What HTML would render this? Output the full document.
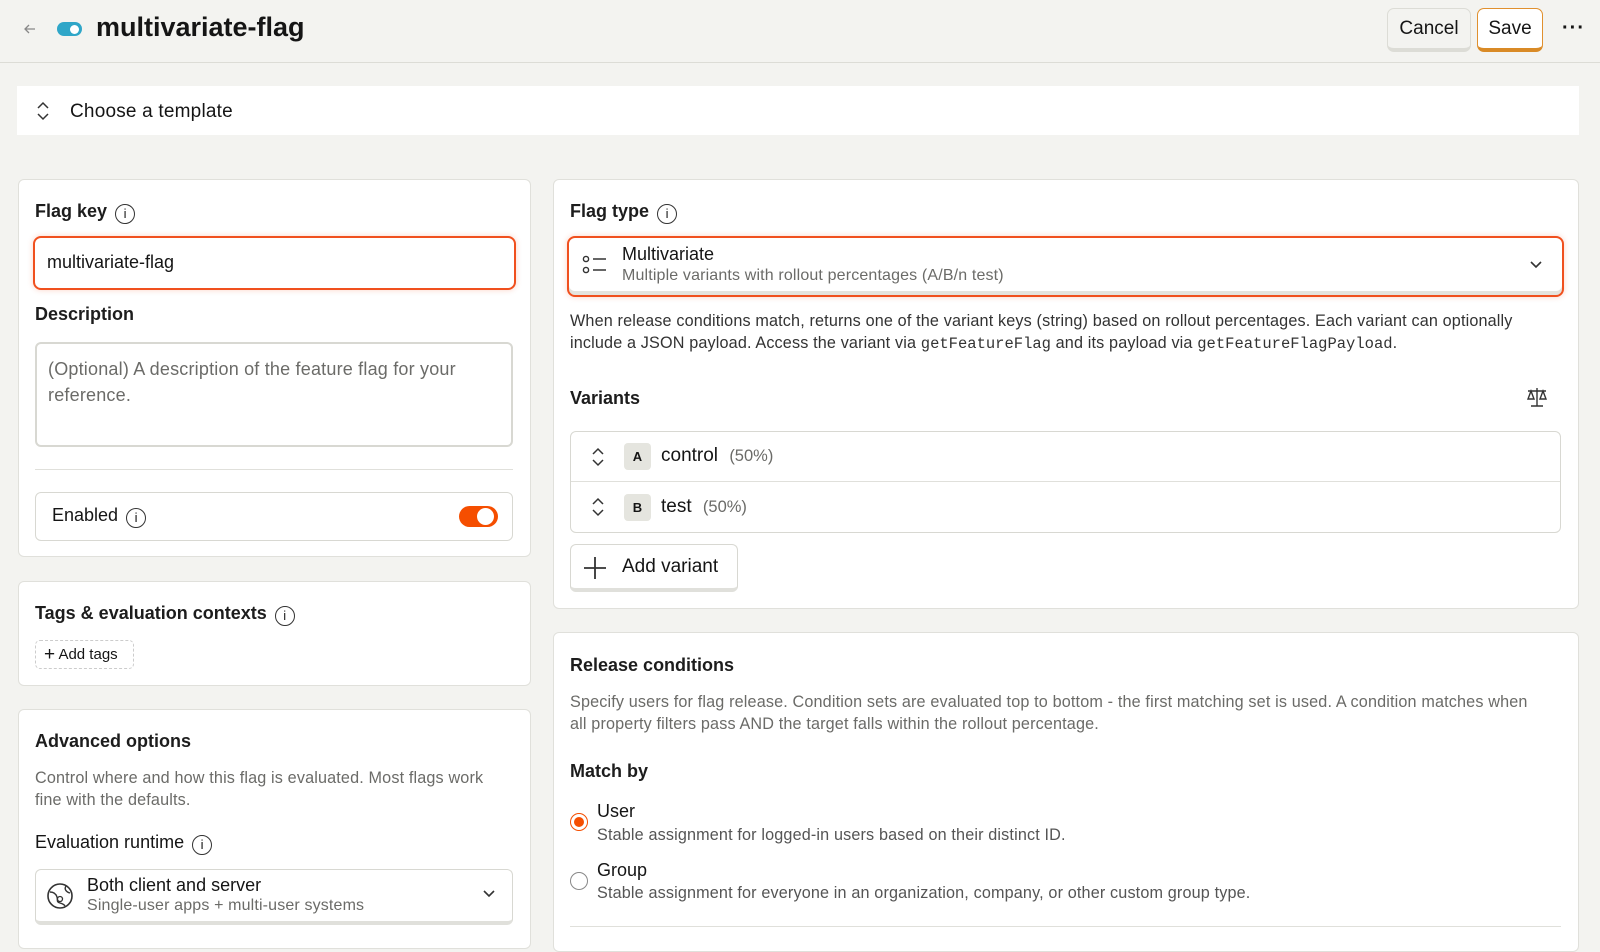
<!DOCTYPE html>
<html><head><meta charset="utf-8"><style>
*{box-sizing:border-box;margin:0;padding:0}
body{width:1600px;height:929px;overflow:hidden;background:#f3f3f0;font-family:"Liberation Sans",sans-serif;color:#151515;position:relative}
.a{position:absolute}
.card{position:absolute;background:#fff;border:1px solid #e0e0db;border-radius:6px}
.lbl{position:absolute;font-size:18px;font-weight:bold;color:#1d1d1d}
.muted{color:#6b6b68}
.info{display:inline-block;width:20px;height:20px;border:1.6px solid #333;border-radius:50%;font-size:13px;font-weight:normal;text-align:center;line-height:17px;vertical-align:0px;margin-left:8px;font-family:"Liberation Sans",sans-serif;position:relative;top:1px}
.box{position:absolute;border:1px solid #d8d8d2;border-radius:6px;background:#fff}
.mono{font-family:"Liberation Mono",monospace;font-size:15.5px;letter-spacing:0}
.p{font-size:16.2px;line-height:22px;letter-spacing:0.15px}
</style></head><body>
<!-- header -->
<div class="a" style="left:0;top:62px;width:1600px;height:1px;background:#dcdcd6"></div>
<svg class="a" style="left:22px;top:21px" width="16" height="16" viewBox="0 0 16 16"><path d="M13 8H3M7 4L3 8l4 4" fill="none" stroke="#888" stroke-width="1.3"/></svg>
<div class="a" style="left:57px;top:22px;width:25px;height:14px;border-radius:7px;background:#2fa6c8"></div>
<div class="a" style="left:70px;top:25px;width:9px;height:9px;border-radius:50%;background:#fff"></div>
<div class="a" style="left:96px;top:12px;font-size:27px;font-weight:bold">multivariate-flag</div>
<div class="a" style="left:1387px;top:8px;width:84px;height:44px;border:1px solid #dcdcd6;border-bottom:4px solid #dcdcd6;border-radius:7px;background:#f3f3f0;font-size:19px;text-align:center;line-height:40px">Cancel</div>
<div class="a" style="left:1477px;top:8px;width:66px;height:44px;border:1.5px solid #e0902e;border-bottom:4px solid #d98a26;border-radius:7px;background:#fff;font-size:19px;text-align:center;line-height:40px">Save</div>
<div class="a" style="left:1562px;top:17px;font-size:20px;font-weight:bold;letter-spacing:1px">···</div>
<!-- template -->
<div class="a" style="left:17px;top:86px;width:1562px;height:49px;background:#fff"></div>
<svg class="a" style="left:35px;top:101px" width="16" height="20" viewBox="0 0 16 20"><path d="M3 7l5-5 5 5M3 13l5 5 5-5" fill="none" stroke="#333" stroke-width="1.5"/></svg>
<div class="a" style="left:70px;top:101px;font-size:19px;letter-spacing:0.2px">Choose a template</div>
<!-- left card 1 -->
<div class="card" style="left:18px;top:179px;width:513px;height:378px"></div>
<div class="lbl" style="left:35px;top:201px">Flag key<span class="info">i</span></div>
<div class="a" style="left:33px;top:236px;width:483px;height:54px;border:2.5px solid #f0501e;border-radius:8px;background:#fff;box-shadow:0 0 6px rgba(240,80,30,.25)"></div>
<div class="a" style="left:47px;top:252px;font-size:18px">multivariate-flag</div>
<div class="lbl" style="left:35px;top:304px">Description</div>
<div class="box" style="left:35px;top:342px;width:478px;height:105px;border-width:2px"></div>
<div class="a muted" style="left:48px;top:356px;font-size:18px;line-height:26px;width:450px;letter-spacing:0.2px">(Optional) A description of the feature flag for your reference.</div>
<div class="a" style="left:35px;top:469px;width:478px;height:1px;background:#e0e0db"></div>
<div class="box" style="left:35px;top:492px;width:478px;height:49px"></div>
<div class="a" style="left:52px;top:505px;font-size:18px">Enabled<span class="info">i</span></div>
<div class="a" style="left:459px;top:506px;width:39px;height:21px;border-radius:11px;background:#f54e00"></div>
<div class="a" style="left:477px;top:508px;width:17px;height:17px;border-radius:50%;background:#fff"></div>
<!-- left card 2 -->
<div class="card" style="left:18px;top:581px;width:513px;height:105px"></div>
<div class="lbl" style="left:35px;top:603px">Tags &amp; evaluation contexts<span class="info">i</span></div>
<div class="a" style="left:35px;top:640px;width:99px;height:29px;border:1px dashed #ccc;border-radius:5px;font-size:15px;line-height:27px;padding-left:8px"><span style="font-size:19px;vertical-align:-1px">+</span> Add tags</div>
<!-- left card 3 -->
<div class="card" style="left:18px;top:709px;width:513px;height:240px"></div>
<div class="lbl" style="left:35px;top:731px">Advanced options</div>
<div class="a muted p" style="left:35px;top:767px;width:475px">Control where and how this flag is evaluated. Most flags work fine with the defaults.</div>
<div class="a" style="left:35px;top:832px;font-size:18px">Evaluation runtime<span class="info">i</span></div>
<div class="box" style="left:35px;top:869px;width:478px;height:56px;border-bottom:4px solid #e0e0db"></div>
<svg class="a" style="left:46px;top:882px" width="28" height="28" viewBox="0 0 28 28"><circle cx="14" cy="14" r="12" fill="none" stroke="#333" stroke-width="1.6"/><path d="M4 10c4 0 6 2 7 5s-1 5 3 6 5 3 5 3M20 4c-2 3 0 6 4 7" fill="none" stroke="#333" stroke-width="1.4"/><circle cx="14" cy="17" r="2.5" fill="none" stroke="#333" stroke-width="1.3"/></svg>
<div class="a" style="left:87px;top:875px;font-size:18px">Both client and server</div>
<div class="a muted" style="left:87px;top:897px;font-size:16px;letter-spacing:0.15px">Single-user apps + multi-user systems</div>
<svg class="a" style="left:482px;top:889px" width="14" height="10" viewBox="0 0 14 10"><path d="M2 2l5 5 5-5" fill="none" stroke="#333" stroke-width="1.6"/></svg>
<!-- right card 1 -->
<div class="card" style="left:553px;top:179px;width:1026px;height:430px"></div>
<div class="lbl" style="left:570px;top:201px">Flag type<span class="info">i</span></div>
<div class="a" style="left:567px;top:236px;width:997px;height:61px;border:2.5px solid #f0501e;border-radius:8px;background:#fff;box-shadow:inset 0 -4px 0 #e4e4de,0 0 6px rgba(240,80,30,.25)"></div>
<svg class="a" style="left:582px;top:254px" width="26" height="22" viewBox="0 0 26 22"><circle cx="4" cy="5" r="2.6" fill="none" stroke="#333" stroke-width="1.4"/><circle cx="4" cy="16" r="2.6" fill="none" stroke="#333" stroke-width="1.4"/><path d="M11 5h13M11 16h13" stroke="#333" stroke-width="1.6"/></svg>
<div class="a" style="left:622px;top:244px;font-size:18px">Multivariate</div>
<div class="a muted" style="left:622px;top:267px;font-size:16px;letter-spacing:0.15px">Multiple variants with rollout percentages (A/B/n test)</div>
<svg class="a" style="left:1529px;top:260px" width="14" height="10" viewBox="0 0 14 10"><path d="M2 2l5 5 5-5" fill="none" stroke="#333" stroke-width="1.6"/></svg>
<div class="a p" style="left:570px;top:310px;width:975px;color:#333">When release conditions match, returns one of the variant keys (string) based on rollout percentages. Each variant can optionally include a JSON payload. Access the variant via <span class="mono">getFeatureFlag</span> and its payload via <span class="mono">getFeatureFlagPayload</span>.</div>
<div class="lbl" style="left:570px;top:388px">Variants</div>
<svg class="a" style="left:1525px;top:386px" width="24" height="22" viewBox="0 0 24 22"><path d="M12 2v18M6 20h12M3 5h18M6 5l-3 8h6zM18 5l-3 8h6z" fill="none" stroke="#333" stroke-width="1.4"/></svg>
<div class="box" style="left:570px;top:431px;width:991px;height:102px"></div>
<div class="a" style="left:571px;top:481px;width:989px;height:1px;background:#e0e0db"></div>
<svg class="a" style="left:590px;top:446px" width="16" height="22" viewBox="0 0 16 22"><path d="M3 8l5-5 5 5M3 14l5 5 5-5" fill="none" stroke="#333" stroke-width="1.5"/></svg>
<svg class="a" style="left:590px;top:496px" width="16" height="22" viewBox="0 0 16 22"><path d="M3 8l5-5 5 5M3 14l5 5 5-5" fill="none" stroke="#333" stroke-width="1.5"/></svg>
<div class="a" style="left:624px;top:443px;width:27px;height:27px;border-radius:4px;background:#e5e5df;font-size:13px;font-weight:bold;text-align:center;line-height:27px">A</div>
<div class="a" style="left:624px;top:494px;width:27px;height:27px;border-radius:4px;background:#e5e5df;font-size:13px;font-weight:bold;text-align:center;line-height:27px">B</div>
<div class="a" style="left:661px;top:445px;font-size:19px">control <span class="muted" style="font-size:16.5px;margin-left:6px">(50%)</span></div>
<div class="a" style="left:661px;top:496px;font-size:19px">test <span class="muted" style="font-size:16.5px;margin-left:6px">(50%)</span></div>
<div class="box" style="left:570px;top:544px;width:168px;height:48px;border-bottom:4px solid #e0e0db"></div>
<svg class="a" style="left:583px;top:556px" width="24" height="24" viewBox="0 0 24 24"><path d="M12 1v22M1 12h22" stroke="#333" stroke-width="1.8"/></svg>
<div class="a" style="left:622px;top:556px;font-size:19px">Add variant</div>
<!-- release card -->
<div class="card" style="left:553px;top:632px;width:1026px;height:320px"></div>
<div class="lbl" style="left:570px;top:655px">Release conditions</div>
<div class="a muted p" style="left:570px;top:691px;width:960px">Specify users for flag release. Condition sets are evaluated top to bottom - the first matching set is used. A condition matches when all property filters pass AND the target falls within the rollout percentage.</div>
<div class="lbl" style="left:570px;top:761px">Match by</div>
<div class="a" style="left:570px;top:813px;width:18px;height:18px;border-radius:50%;border:1.5px solid #f54e00"></div>
<div class="a" style="left:574px;top:817px;width:10px;height:10px;border-radius:50%;background:#f54e00"></div>
<div class="a" style="left:597px;top:801px;font-size:18px">User</div>
<div class="a p" style="left:597px;top:824px;color:#555">Stable assignment for logged-in users based on their distinct ID.</div>
<div class="a" style="left:570px;top:872px;width:18px;height:18px;border-radius:50%;border:1.5px solid #888"></div>
<div class="a" style="left:597px;top:860px;font-size:18px">Group</div>
<div class="a p" style="left:597px;top:882px;color:#555">Stable assignment for everyone in an organization, company, or other custom group type.</div>
<div class="a" style="left:570px;top:926px;width:991px;height:1px;background:#e0e0db"></div>
</body></html>
